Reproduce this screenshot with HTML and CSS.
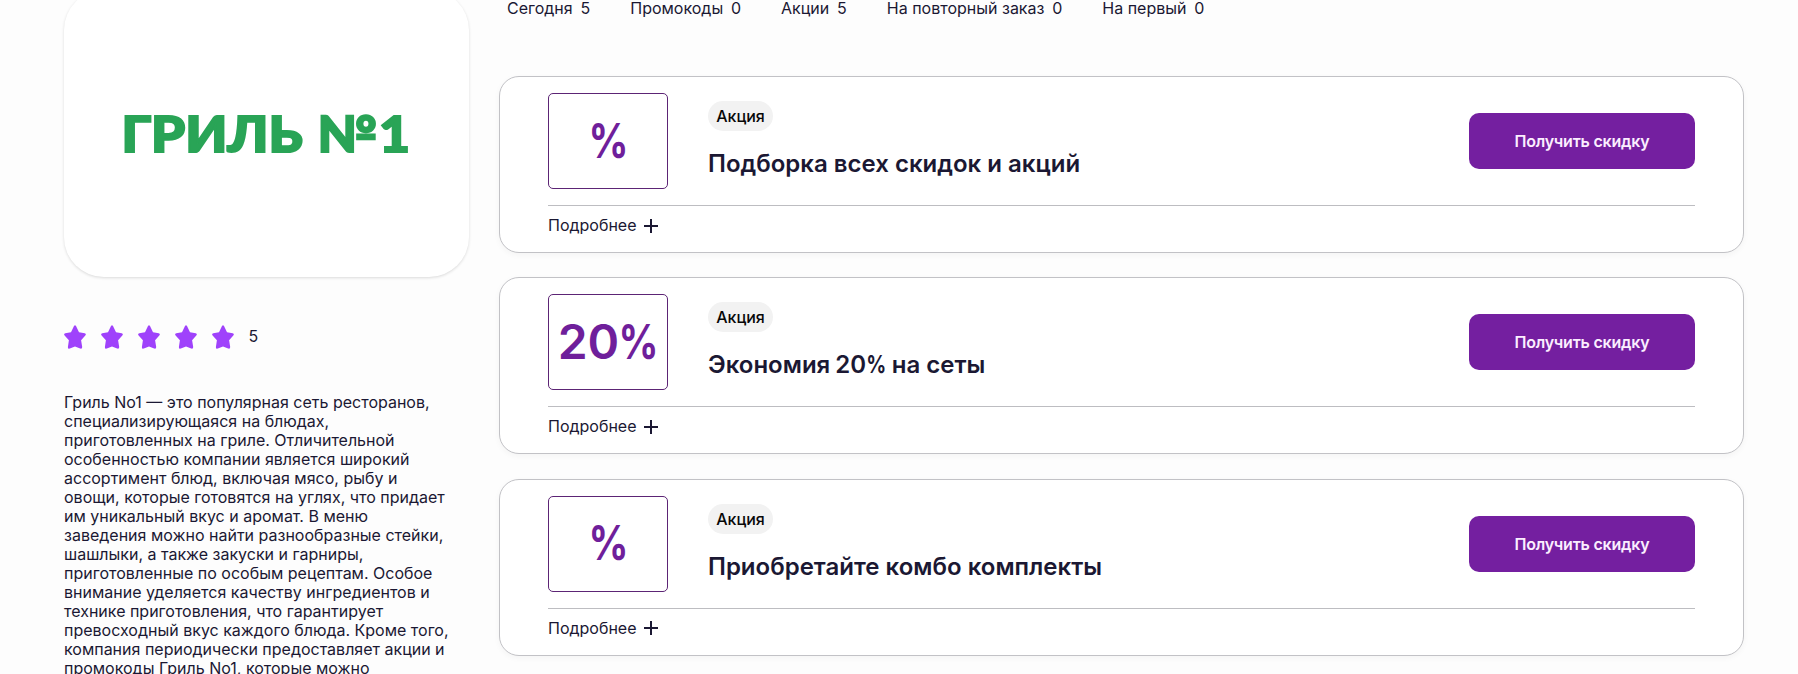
FILE: index.html
```html
<!DOCTYPE html>
<html lang="ru">
<head>
    <meta charset="UTF-8">
    <meta name="viewport" content="width=device-width, initial-scale=1.0">
    <title>Гриль №1</title>
    <link rel="stylesheet" href="styles.css">
</head>
<body>
    <!-- Star shape shared by the rating -->
    <svg class="sprite" width="0" height="0">
        <symbol id="star" viewBox="0 0 22 24">
            <path d="M10 1Q11 -.6 12 1L15 7.2L20.7 8.2Q22.7 8.8 21.3 10.5L17.1 15.2L18.2 22Q18.2 24.3 16.2 23.6L11 21.4L5.8 23.6Q3.8 24.3 3.9 22L4.9 15.2L.6 10.5Q-.7 8.8 1.3 8.2L7 7.2Z"/>
        </symbol>
    </svg>

    <main class="page">
        <!-- Shop info -->
        <aside class="sidebar">
            <div class="logo">
                <svg width="286" height="50" viewBox="0 0 286 50">
                    <text class="logo-text" x="-2.5" y="42.5" textLength="181" lengthAdjust="spacingAndGlyphs">ГРИЛЬ</text>
                    <text class="logo-text" x="193" y="42.5" textLength="60" lengthAdjust="spacingAndGlyphs">№</text>
                    <text class="logo-text" x="255" y="42.5" textLength="31" lengthAdjust="spacingAndGlyphs">1</text>
                </svg>
            </div>
            <div class="rating">
                <svg class="star"><use href="#star"/></svg>
                <svg class="star"><use href="#star"/></svg>
                <svg class="star"><use href="#star"/></svg>
                <svg class="star"><use href="#star"/></svg>
                <svg class="star"><use href="#star"/></svg>
                <span>5</span>
            </div>
            <p class="description">Гриль No1 — это популярная сеть ресторанов, специализирующаяся на блюдах, приготовленных на гриле. Отличительной особенностью компании является широкий ассортимент блюд, включая мясо, рыбу и овощи, которые готовятся на углях, что придает им уникальный вкус и аромат. В меню заведения можно найти разнообразные стейки, шашлыки, а также закуски и гарниры, приготовленные по особым рецептам. Особое внимание уделяется качеству ингредиентов и технике приготовления, что гарантирует превосходный вкус каждого блюда. Кроме того, компания периодически предоставляет акции и промокоды Гриль No1, которые можно</p>
        </aside>

        <!-- Offers -->
        <section class="content">
            <nav class="filters">
                <a><span>Сегодня</span><span>5</span></a>
                <a><span>Промокоды</span><span>0</span></a>
                <a><span>Акции</span><span>5</span></a>
                <a><span>На повторный заказ</span><span>0</span></a>
                <a><span>На первый</span><span>0</span></a>
            </nav>

            <div class="offers">
                <article class="card">
                    <div class="card-main">
                        <div class="discount"><span class="percent">%</span></div>
                        <div class="card-info">
                            <span class="badge">Акция</span>
                            <h2>Подборка всех скидок и акций</h2>
                        </div>
                        <button class="get-button">Получить скидку</button>
                    </div>
                    <div class="details">
                        <span>Подробнее</span>
                        <svg class="plus" viewBox="0 0 14 14"><path d="M7 0V14M0 7H14"/></svg>
                    </div>
                </article>

                <article class="card">
                    <div class="card-main">
                        <div class="discount">20<span class="percent">%</span></div>
                        <div class="card-info">
                            <span class="badge">Акция</span>
                            <h2>Экономия <span class="number">20<span class="percent">%</span></span> на сеты</h2>
                        </div>
                        <button class="get-button">Получить скидку</button>
                    </div>
                    <div class="details">
                        <span>Подробнее</span>
                        <svg class="plus" viewBox="0 0 14 14"><path d="M7 0V14M0 7H14"/></svg>
                    </div>
                </article>

                <article class="card">
                    <div class="card-main">
                        <div class="discount"><span class="percent">%</span></div>
                        <div class="card-info">
                            <span class="badge">Акция</span>
                            <h2>Приобретайте комбо комплекты</h2>
                        </div>
                        <button class="get-button">Получить скидку</button>
                    </div>
                    <div class="details">
                        <span>Подробнее</span>
                        <svg class="plus" viewBox="0 0 14 14"><path d="M7 0V14M0 7H14"/></svg>
                    </div>
                </article>
            </div>
        </section>
    </main>
</body>
</html>
```
FILE: styles.css
```css
* {
    box-sizing: border-box;
}
body {
    margin: 0;
    height: 674px;
    overflow: hidden;
    background-color: #fdfdfd;
    color: #1b1833;
    font-family: Inter, sans-serif;
    font-size: 16px;
    line-height: 19px;
}
.sprite {
    display: block;
}
.page {
    display: flex;
    align-items: flex-start;
    gap: 30px;
    padding: 0 54px 0 64px;
}
.sidebar {
    width: 405px;
    flex-shrink: 0;
}
.logo {
    display: flex;
    align-items: center;
    justify-content: center;
    height: 287px;
    margin-top: -10px;
    background-color: #fff;
    border-radius: 40px;
    box-shadow: 0 1px 3px rgba(0, 0, 0, 0.14);
}
.logo svg {
    overflow: visible;
}
.logo-text {
    font-family: Lato, sans-serif;
    font-size: 50px;
    font-weight: 900;
    fill: #29a456;
    stroke: #29a456;
    stroke-width: 2;
}
.rating {
    display: flex;
    align-items: center;
    gap: 15px;
    height: 24px;
    margin-top: 48px;
}
.rating span {
    margin: 0 0 2px -0.5px;
}
.star {
    width: 22px;
    height: 24px;
    fill: #9f42fb;
}
.description {
    width: 390px;
    margin: 44px 0 0;
}
.content {
    flex: 1;
}
.filters {
    display: flex;
    gap: 40px;
    padding-left: 8px;
    margin-top: -1px;
}
.filters a {
    display: flex;
    gap: 7.8px;
}
.offers {
    display: flex;
    flex-direction: column;
    gap: 24.4px;
    margin-top: 58px;
}
.card {
    height: 177px;
    padding: 16px 48px 0;
    background-color: #fff;
    border: 1px solid #c2c2c6;
    border-radius: 20px;
    box-shadow: 0 2px 6px rgba(0, 0, 0, 0.04);
}
.card-main {
    display: flex;
    align-items: center;
    height: 113px;
    padding-bottom: 16px;
    border-bottom: 1px solid #bdbdc1;
}
.discount {
    display: flex;
    align-items: center;
    justify-content: center;
    width: 120px;
    height: 96px;
    padding-bottom: 2px;
    border: 1px solid #5c2475;
    border-radius: 5px;
    color: #6f1f9b;
    font-size: 48px;
    font-weight: 600;
}
.percent {
    display: inline-block;
    margin: 0 -0.1em;
    font-weight: 700;
    transform: scaleX(0.82);
}
.number {
    margin-left: -1px;
}
.card-info {
    flex: 1;
    align-self: stretch;
    padding: 8px 0 0 40px;
}
.badge {
    display: block;
    width: 65px;
    height: 30px;
    line-height: 31px;
    text-align: center;
    background-color: #f2f2f2;
    border-radius: 15px;
    color: #080808;
    font-size: 16px;
    font-weight: 500;
}
h2 {
    margin: 18px 0 0;
    font-size: 24px;
    line-height: 29px;
    font-weight: 600;
}
.get-button {
    width: 226px;
    height: 56px;
    padding: 0;
    border: none;
    border-radius: 10px;
    background-color: #741fa0;
    color: #fbeeff;
    font-family: inherit;
    font-size: 16px;
    font-weight: 600;
    letter-spacing: -0.2px;
}
.details {
    display: flex;
    align-items: center;
    gap: 7px;
    padding-top: 10px;
}
.plus {
    width: 14px;
    height: 14px;
    stroke: #1b1833;
    stroke-width: 2;
}
```
